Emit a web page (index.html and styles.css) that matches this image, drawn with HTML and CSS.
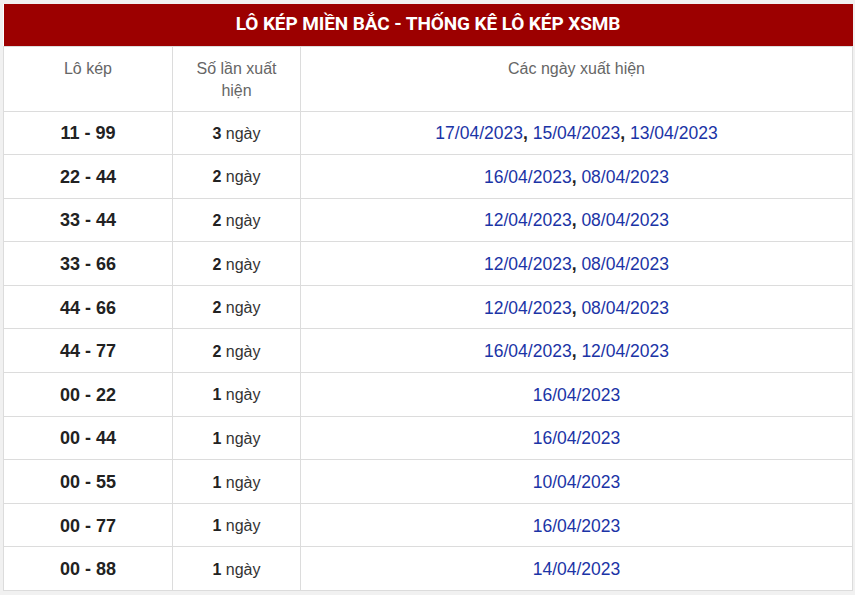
FILE: index.html
```html
<!DOCTYPE html>
<html lang="vi">
<head>
<meta charset="utf-8">
<title>Lô kép miền Bắc</title>
<link rel="stylesheet" href="styles.css">
</head>
<body>
<div class="wrap">
  <table class="tbl">
    <colgroup>
      <col class="c1">
      <col class="c2">
      <col class="c3">
    </colgroup>
    <thead>
      <tr><th colspan="3" class="title">LÔ KÉP MIỀN BẮC - THỐNG KÊ LÔ KÉP XSMB</th></tr>
      <tr class="head">
        <th>Lô kép</th>
        <th>Số lần xuất hiện</th>
        <th>Các ngày xuất hiện</th>
      </tr>
    </thead>
    <tbody>
      <tr><td class="lo">11 - 99</td><td class="cnt"><b>3</b> ngày</td><td class="dates"><span>17/04/2023</span><b>,</b> <span>15/04/2023</span><b>,</b> <span>13/04/2023</span></td></tr>
      <tr><td class="lo">22 - 44</td><td class="cnt"><b>2</b> ngày</td><td class="dates"><span>16/04/2023</span><b>,</b> <span>08/04/2023</span></td></tr>
      <tr><td class="lo">33 - 44</td><td class="cnt"><b>2</b> ngày</td><td class="dates"><span>12/04/2023</span><b>,</b> <span>08/04/2023</span></td></tr>
      <tr><td class="lo">33 - 66</td><td class="cnt"><b>2</b> ngày</td><td class="dates"><span>12/04/2023</span><b>,</b> <span>08/04/2023</span></td></tr>
      <tr><td class="lo">44 - 66</td><td class="cnt"><b>2</b> ngày</td><td class="dates"><span>12/04/2023</span><b>,</b> <span>08/04/2023</span></td></tr>
      <tr><td class="lo">44 - 77</td><td class="cnt"><b>2</b> ngày</td><td class="dates"><span>16/04/2023</span><b>,</b> <span>12/04/2023</span></td></tr>
      <tr><td class="lo">00 - 22</td><td class="cnt"><b>1</b> ngày</td><td class="dates"><span>16/04/2023</span></td></tr>
      <tr><td class="lo">00 - 44</td><td class="cnt"><b>1</b> ngày</td><td class="dates"><span>16/04/2023</span></td></tr>
      <tr><td class="lo">00 - 55</td><td class="cnt"><b>1</b> ngày</td><td class="dates"><span>10/04/2023</span></td></tr>
      <tr><td class="lo">00 - 77</td><td class="cnt"><b>1</b> ngày</td><td class="dates"><span>16/04/2023</span></td></tr>
      <tr><td class="lo">00 - 88</td><td class="cnt"><b>1</b> ngày</td><td class="dates"><span>14/04/2023</span></td></tr>
    </tbody>
  </table>
</div>
</body>
</html>
```
FILE: styles.css
```css
html, body {
  margin: 0;
  padding: 0;
  background: #f1f1f1;
}
body {
  font-family: "Liberation Sans", Arial, sans-serif;
  color: #333;
}
.wrap {
  padding: 4px 3px 0 3px;
}
.tbl {
  width: 849px;
  border-collapse: collapse;
  background: #fff;
  table-layout: fixed;
}
.c1 { width: 169px; }
.c2 { width: 128px; }
.c3 { width: 552px; }
.title {
  background: #9c0000;
  color: #fff;
  font-family: Roboto, "Liberation Sans", sans-serif;
  font-weight: 700;
  font-size: 19px;
  letter-spacing: -0.1px;
  height: 42px;
  padding: 0 0 2px;
  text-align: center;
  vertical-align: middle;
  border: none;
  box-sizing: border-box;
}
.head th {
  font-weight: 400;
  font-size: 16px;
  line-height: 22px;
  color: #666;
  height: 65px;
  padding: 11px 20px 0;
  vertical-align: top;
  text-align: center;
  border: 1px solid #dcdcdc;
  box-sizing: border-box;
}
td {
  height: 43.6px;
  padding: 2px 8px 0;
  box-sizing: border-box;
  border: 1px solid #dcdcdc;
  text-align: center;
  vertical-align: middle;
}
.lo {
  font-weight: 700;
  font-size: 18px;
  color: #222;
}
.cnt {
  font-size: 16px;
  color: #333;
}
.cnt b { color: #222; }
.dates {
  font-size: 17.5px;
  color: #222;
}
.dates span { color: #1b34a6; }
.dates b { color: #222; }
```
